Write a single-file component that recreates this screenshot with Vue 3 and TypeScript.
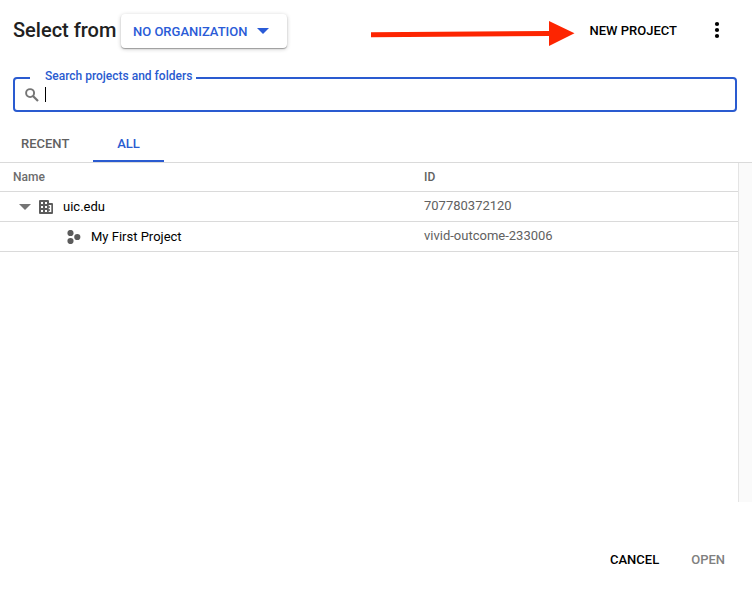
<script setup lang="ts">
import { ref } from 'vue'

interface Resource {
  name: string
  id: string
  kind: 'organization' | 'project'
}

const tabs = ['RECENT', 'ALL']
const activeTab = ref('ALL')

const resources: Resource[] = [
  { name: 'uic.edu', id: '707780372120', kind: 'organization' },
  { name: 'My First Project', id: 'vivid-outcome-233006', kind: 'project' },
]
</script>

<template>
  <main class="dialog">
    <header class="header">
      <h1 class="title">Select from</h1>
      <button class="org">
        <span class="org-label">NO ORGANIZATION</span>
        <svg width="12" height="6" viewBox="0 0 12 6"><path d="M0 0h12L6 6z" fill="#2a5bd7" /></svg>
      </button>
      <svg class="arrow" width="206" height="28" viewBox="0 0 206 28">
        <path d="M1 12.300 179 11V1l25.500 12.200L179 26V16L1 17.300z" fill="#fd2501" />
      </svg>
      <button class="new-project">NEW PROJECT</button>
      <button class="more">
        <svg width="6" height="18" viewBox="0 0 6 18">
          <circle cx="3" cy="3" r="2.1" /><circle cx="3" cy="9" r="2.1" /><circle cx="3" cy="15" r="2.1" />
        </svg>
      </button>
    </header>

    <div class="search">
      <span class="search-label">Search projects and folders</span>
      <svg class="search-icon" width="14" height="14" viewBox="0 0 14 14" fill="none" stroke="#757575">
        <circle cx="5.100" cy="5.100" r="4" stroke-width="1.900" />
        <path d="M8 8 13 13" stroke-width="2.200" />
      </svg>
      <span class="caret"></span>
    </div>

    <nav class="tabs">
      <button
        v-for="tab in tabs"
        :key="tab"
        class="tab"
        :class="{ active: tab === activeTab }"
        @click="activeTab = tab"
      >{{ tab }}</button>
    </nav>

    <section class="list">
      <div class="table">
        <div class="row head"><span>Name</span><span>ID</span></div>
        <div v-for="item in resources" :key="item.id" class="row" :class="item.kind">
          <div class="name">
            <template v-if="item.kind === 'organization'">
              <svg class="expander" width="12" height="6" viewBox="0 0 12 6"><path d="M0 0h12L6 6z" fill="#757575" /></svg>
              <svg class="building" width="14" height="14" viewBox="0 0 14 14">
                <path fill="#5c5c5c" fill-rule="evenodd" d="M1 0h8a1 1 0 0 1 1 1v2h3a1 1 0 0 1 1 1v9a1 1 0 0 1-1 1H1a1 1 0 0 1-1-1V1a1 1 0 0 1 1-1zM2 2v2h2V2zM6 2v2h2V2zM2 6v2h2V6zM6 6v2h2V6zM2 10v2h2v-2zM6 10v2h2v-2zM9.700 5v1.300H11v1.400H9.700v1.600H11v1.400H9.700V12h2.600V5z" />
              </svg>
            </template>
            <svg v-else class="dots" width="14" height="14" viewBox="0 0 14 14" fill="#5c5c5c">
              <circle cx="3.500" cy="3" r="3.100" /><circle cx="3.500" cy="11" r="3.100" /><circle cx="10.300" cy="7" r="3.100" />
            </svg>
            <span class="name-text">{{ item.name }}</span>
          </div>
          <span class="id">{{ item.id }}</span>
        </div>
      </div>
      <div class="scrollbar"></div>
    </section>

    <footer class="footer">
      <button class="action">CANCEL</button>
      <button class="action disabled" disabled>OPEN</button>
    </footer>
  </main>
</template>

<style>
body {
  background: #fff;
}
</style>

<style scoped>
.dialog {
  position: relative;
  box-sizing: border-box;
  width: 752px;
  height: 591px;
  display: flex;
  flex-direction: column;
  overflow: hidden;
  background: #fff;
  font-family: Roboto, sans-serif;
  font-size: 13px;
  color: #000;
}
button {
  border: 0;
  margin: 0;
  padding: 0;
  background: none;
  font: 500 13px Roboto, sans-serif;
  color: #000;
  white-space: nowrap;
}
svg {
  display: block;
  flex: none;
}
.header {
  height: 77px;
  box-sizing: border-box;
  padding: 14px 32px 0 13px;
  display: flex;
  align-items: flex-start;
}
.title {
  margin: 0;
  width: 108px;
  font-size: 20px;
  font-weight: 500;
  line-height: 33px;
  color: #212121;
  white-space: nowrap;
}
.org {
  display: flex;
  align-items: center;
  gap: 9px;
  width: 166px;
  height: 34px;
  padding: 0 0 0 12px;
  border-radius: 4px;
  background: #fff;
  box-shadow: 0 1px 1px rgba(0, 0, 0, 0.3), 0 1px 4px rgba(0, 0, 0, 0.22);
  color: #2a5bd7;
}
.org-label {
  width: 115px;
  text-align: left;
}
.arrow {
  position: absolute;
  left: 370px;
  top: 20px;
}
.new-project {
  margin-left: auto;
  line-height: 34px;
}
.more {
  margin: 7px 0 0 37px;
}
.search {
  position: relative;
  box-sizing: border-box;
  height: 35px;
  margin: 0 15px 0 13px;
  border: 2px solid #2a5bd0;
  border-radius: 4px;
  display: flex;
  align-items: center;
}
.search-label {
  position: absolute;
  left: 15px;
  top: -11px;
  padding: 0 4px 0 15px;
  background: #fff;
  color: #2a5bd0;
  font-size: 12px;
  font-weight: 500;
  line-height: 16px;
  white-space: nowrap;
}
.search-icon {
  margin-left: 10px;
}
.caret {
  width: 1px;
  height: 15px;
  margin-left: 6px;
  background: #000;
}
.tabs {
  height: 51px;
  box-sizing: border-box;
  padding: 14px 0 0;
  border-bottom: 1px solid #dadada;
  display: flex;
}
.tab {
  box-sizing: border-box;
  height: 36px;
  padding: 1px 24px 0;
  border-bottom: 2px solid transparent;
  line-height: 33px;
  color: #616161;
}
.tab:first-child {
  width: 93px;
  padding-left: 21px;
  text-align: left;
}
.tab.active {
  width: 71px;
  border-color: #2a5bd0;
  color: #2a5bd0;
}
.list {
  height: 339px;
  display: flex;
}
.table {
  flex: 1;
}
.row {
  display: grid;
  grid-template-columns: 424px 1fr;
  height: 29px;
  border-bottom: 1px solid #dadada;
  line-height: 29px;
}
.head {
  height: 28px;
  line-height: 28px;
  font-size: 12px;
  font-weight: 500;
  color: #616161;
}
.head span:first-child {
  padding-left: 13px;
  color: #6c6c6c;
}
.name {
  display: flex;
  align-items: center;
}
.name-text {
  line-height: 29px;
}
.expander {
  margin-left: 19px;
}
.building {
  margin: 1px 10px 0 8px;
}
.dots {
  margin: 1px 10px 0 67px;
}
.id {
  line-height: 28px;
  color: #616161;
}
.scrollbar {
  box-sizing: border-box;
  width: 14px;
  border-left: 1px solid #e4e4e4;
  background: #fafafa;
}
.footer {
  display: flex;
  justify-content: flex-end;
  gap: 32px;
  padding: 48px 27px 0 0;
}
.action {
  line-height: 19px;
}
.disabled {
  color: #808080;
}
</style>
